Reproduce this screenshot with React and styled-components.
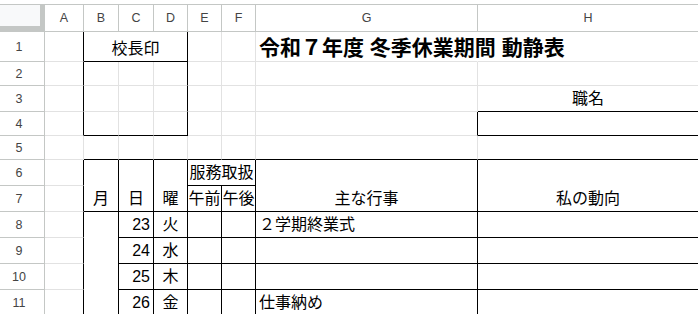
import React from 'react'
import styled, { createGlobalStyle } from 'styled-components'

const GlobalStyle = createGlobalStyle`
  html, body {
    margin: 0;
    padding: 0;
    background: #fff;
    overflow: hidden;
  }
  body {
    font-family: "Liberation Sans", "Noto Sans CJK JP", sans-serif;
  }
`

const COLS = ['A', 'B', 'C', 'D', 'E', 'F', 'G', 'H']
const COL_W = [39, 35, 35, 34, 34, 34, 222, 221]
const ROW_H = [30, 24, 26, 24, 24, 26, 26, 26, 26, 26, 26]

const Sheet = styled.div`
  display: grid;
  grid-template-columns: 45px ${COL_W.map((w) => w + 'px').join(' ')};
  grid-template-rows: 27px ${ROW_H.map((h) => h + 'px').join(' ')};
  margin-top: 4px;
  border-top: 1px solid #c4c7c5;
  width: max-content;
`

const Corner = styled.div`
  grid-column: 1;
  grid-row: 1;
  box-sizing: border-box;
  background: #f8f9fa;
  border-right: 5px solid #c4c7c5;
  border-bottom: 6px solid #c4c7c5;
`

const ColHead = styled.div`
  grid-row: 1;
  grid-column: ${(p) => p.$c};
  box-sizing: border-box;
  display: flex;
  align-items: center;
  justify-content: center;
  border-right: 1px solid #c4c7c5;
  border-bottom: 1px solid #c4c7c5;
  font-size: 12.5px;
  color: #444;
`

const RowHead = styled.div`
  grid-column: 1;
  grid-row: ${(p) => p.$r};
  box-sizing: border-box;
  display: flex;
  align-items: center;
  justify-content: center;
  padding-right: 6px;
  border-right: 1px solid #c4c7c5;
  border-bottom: 1px solid #c4c7c5;
  font-size: 12.5px;
  color: #444;
`

const JUSTIFY = { left: 'flex-start', center: 'center', right: 'flex-end' }

const Cell = styled.div`
  grid-column: ${(p) => p.$c} / span ${(p) => p.$cs || 1};
  grid-row: ${(p) => p.$r} / span ${(p) => p.$rs || 1};
  box-sizing: border-box;
  display: flex;
  align-items: flex-end;
  justify-content: ${(p) => JUSTIFY[p.$align || 'left']};
  padding: 0 3px 2px;
  border-right: 1px solid ${(p) => (p.$br ? '#000' : p.$open ? 'transparent' : '#e2e2e2')};
  border-bottom: 1px solid ${(p) => (p.$bb ? '#000' : '#e2e2e2')};
  font-size: 16px;
  line-height: 20px;
  color: #000;
  white-space: nowrap;
  min-width: 0;
`

const Title = styled.span`
  font-size: 21px;
  font-weight: bold;
  line-height: 24px;
  margin-bottom: -1px;
`

// merged ranges: r = sheet row, c = column index (A = 0)
const MERGED = [
  { r: 1, c: 1, cs: 3, text: '校長印', align: 'center' },
  { r: 6, c: 1, rs: 2, text: '月', align: 'center' },
  { r: 6, c: 2, rs: 2, text: '日', align: 'center' },
  { r: 6, c: 3, rs: 2, text: '曜', align: 'center' },
  { r: 6, c: 4, cs: 2, text: '服務取扱', align: 'center' },
  { r: 6, c: 6, rs: 2, text: '主な行事', align: 'center' },
  { r: 6, c: 7, rs: 2, text: '私の動向', align: 'center' },
  { r: 8, c: 1, rs: 4 },
]

const VALUES = {
  '1-6': { title: '令和７年度 冬季休業期間 動静表', open: true },
  '3-7': { text: '職名', align: 'center' },
  '7-4': { text: '午前', align: 'center' },
  '7-5': { text: '午後', align: 'center' },
  '8-2': { text: '23', align: 'right' },
  '9-2': { text: '24', align: 'right' },
  '10-2': { text: '25', align: 'right' },
  '11-2': { text: '26', align: 'right' },
  '8-3': { text: '火', align: 'center' },
  '9-3': { text: '水', align: 'center' },
  '10-3': { text: '木', align: 'center' },
  '11-3': { text: '金', align: 'center' },
  '8-6': { text: '２学期終業式' },
  '11-6': { text: '仕事納め' },
}

const blackRight = (r, c, cs = 1) => {
  const last = c + cs - 1
  if (last === 0) return r <= 4 || r >= 6
  if (last === 3 && r <= 4) return true
  if (last === 6 && r === 4) return true
  return r >= 6
}

const blackBottom = (r, c, rs = 1) => {
  const last = r + rs - 1
  if (c === 0) return false
  if ((last === 1 || last === 4) && c <= 3) return true
  if (last === 5) return true
  if (c === 7 && (last === 3 || last === 4)) return true
  if (c === 1 && r >= 8) return false
  return last >= 6
}

const buildCells = () => {
  const covered = new Set()
  const list = []
  MERGED.forEach((m) => {
    for (let i = 0; i < (m.rs || 1); i++)
      for (let j = 0; j < (m.cs || 1); j++) covered.add(`${m.r + i}-${m.c + j}`)
    list.push(m)
  })
  for (let r = 1; r <= ROW_H.length; r++)
    for (let c = 0; c < COLS.length; c++) {
      const key = `${r}-${c}`
      if (!covered.has(key)) list.push({ r, c, ...VALUES[key] })
    }
  return list
}

const cells = buildCells()

const App = () => {
  return (
    <>
      <GlobalStyle />
      <Sheet>
        <Corner />
        {COLS.map((name, i) => (
          <ColHead key={name} $c={i + 2}>
            {name}
          </ColHead>
        ))}
        {ROW_H.map((_, i) => (
          <RowHead key={i} $r={i + 2}>
            {i + 1}
          </RowHead>
        ))}
        {cells.map((cell) => (
          <Cell
            key={`${cell.r}-${cell.c}`}
            $r={cell.r + 1}
            $c={cell.c + 2}
            $rs={cell.rs}
            $cs={cell.cs}
            $align={cell.align}
            $open={cell.open}
            $br={blackRight(cell.r, cell.c, cell.cs)}
            $bb={blackBottom(cell.r, cell.c, cell.rs)}
          >
            {cell.title ? <Title>{cell.title}</Title> : cell.text}
          </Cell>
        ))}
      </Sheet>
    </>
  )
}

export default App
